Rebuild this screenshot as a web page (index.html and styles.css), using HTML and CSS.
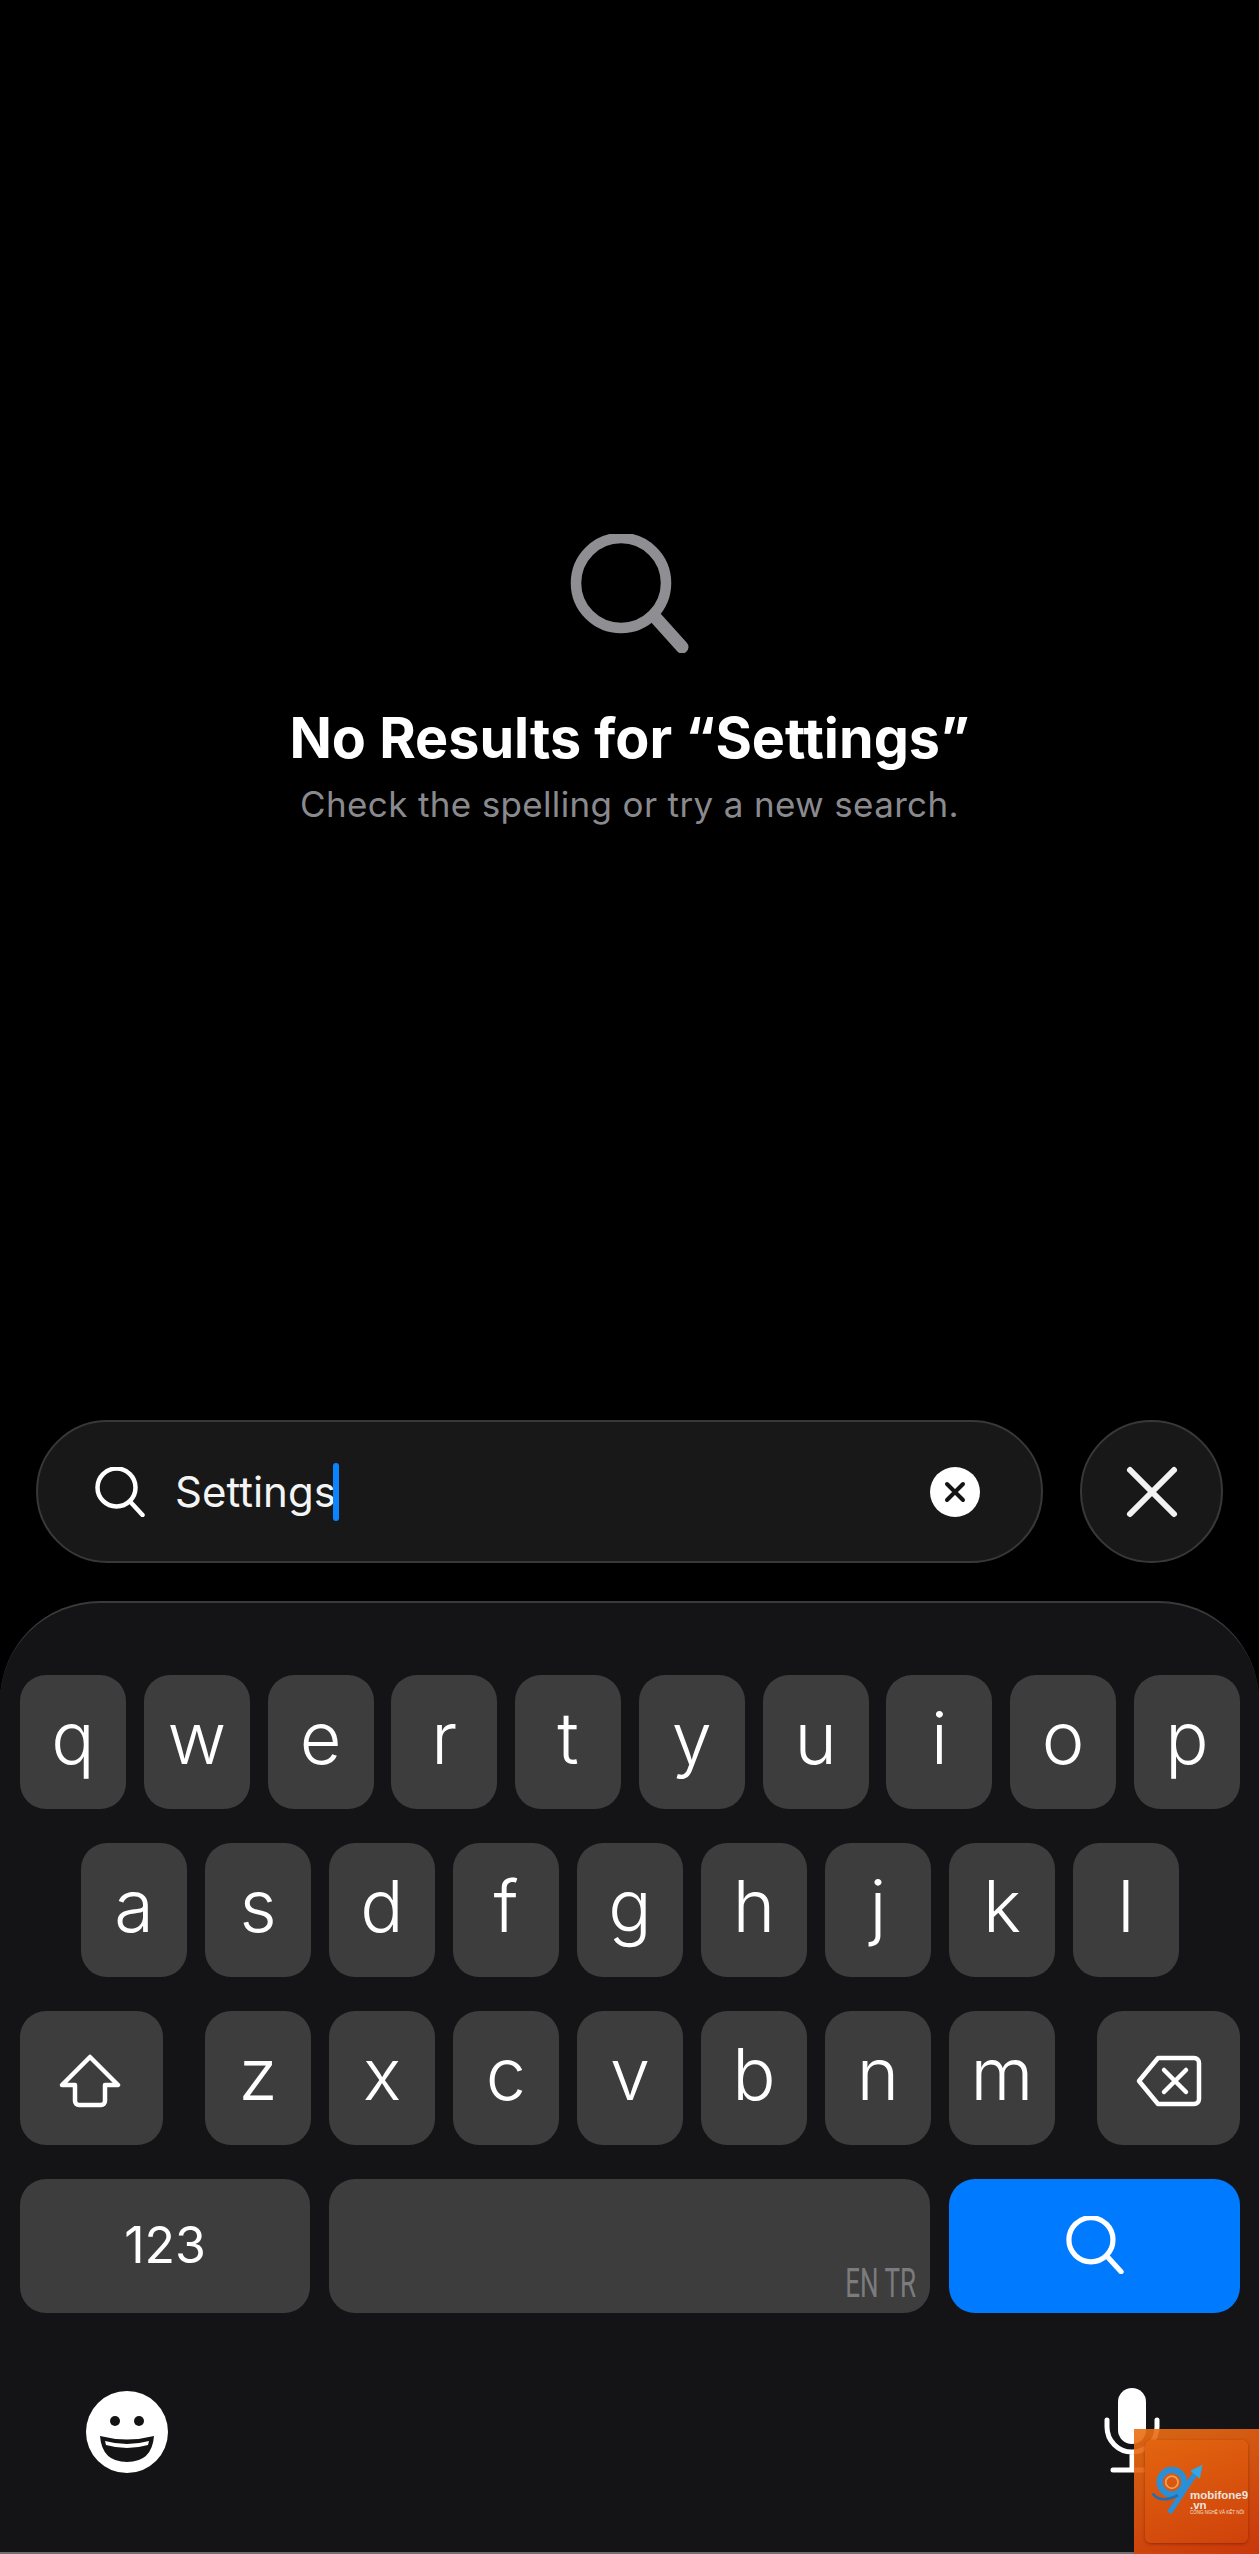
FILE: index.html
```html
<!DOCTYPE html>
<html lang="en">
<head>
    <meta charset="UTF-8" />
    <title>Search</title>
    <link rel="stylesheet" href="styles.css">
</head>
<body>

<svg class="defs" width="0" height="0">
    <symbol id="glass" viewBox="0 0 100 100">
        <circle cx="43" cy="41" r="38" fill="none" stroke="currentColor" stroke-width="9" />
        <path d="M71 70 L95 96" fill="none" stroke="currentColor" stroke-width="9" stroke-linecap="round" />
    </symbol>
</svg>

<main class="empty">
    <svg class="empty-icon" viewBox="0 0 119 119">
        <circle cx="51" cy="49" r="45" fill="none" stroke="currentColor" stroke-width="10.5" />
        <path d="M85 83 L112 113" fill="none" stroke="currentColor" stroke-width="13" stroke-linecap="round" />
    </svg>
    <h1>No Results for “Settings”</h1>
    <p>Check the spelling or try a new search.</p>
</main>

<div class="search-row">
    <div class="search-field">
        <svg class="field-icon"><use href="#glass" /></svg>
        <span class="query">Settings</span><span class="caret"></span>
        <span class="clear">
            <svg viewBox="0 0 50 50"><path d="M17 17 L33 33 M33 17 L17 33" /></svg>
        </span>
    </div>
    <div class="close">
        <svg viewBox="0 0 50 50"><path d="M3 3 L47 47 M47 3 L3 47" /></svg>
    </div>
</div>

<section class="keyboard">
    <div class="row">
        <div class="key">q</div><div class="key">w</div><div class="key">e</div><div class="key">r</div><div class="key">t</div>
        <div class="key">y</div><div class="key">u</div><div class="key">i</div><div class="key">o</div><div class="key">p</div>
    </div>
    <div class="row row-center">
        <div class="key">a</div><div class="key">s</div><div class="key">d</div><div class="key">f</div><div class="key">g</div>
        <div class="key">h</div><div class="key">j</div><div class="key">k</div><div class="key">l</div>
    </div>
    <div class="row">
        <div class="key key-wide">
            <svg class="shift" viewBox="0 0 62 54"><path d="M31 3 L59 31 H46 V47 a4 4 0 0 1 -4 4 H20 a4 4 0 0 1 -4 -4 V31 H3 Z" /></svg>
        </div>
        <div class="letters">
            <div class="key">z</div><div class="key">x</div><div class="key">c</div><div class="key">v</div>
            <div class="key">b</div><div class="key">n</div><div class="key">m</div>
        </div>
        <div class="key key-wide">
            <svg class="backspace" viewBox="0 0 66 52"><path d="M22 3 H58 a5 5 0 0 1 5 5 V44 a5 5 0 0 1 -5 5 H22 L3 26 Z" /><path d="M28 15 L50 37 M50 15 L28 37" /></svg>
        </div>
    </div>
    <div class="row">
        <div class="key key-123">123</div>
        <div class="key key-space"><span class="langs">EN TR</span></div>
        <div class="key key-go"><svg class="go-icon"><use href="#glass" /></svg></div>
    </div>
    <div class="kb-bottom">
        <svg class="emoji" viewBox="0 0 82 82">
            <circle cx="41" cy="41" r="41" fill="#fff" />
            <circle cx="29" cy="30" r="5" fill="#141416" />
            <circle cx="53" cy="30" r="5" fill="#141416" />
            <path d="M14 45 Q41 52 68 45 Q66 71 41 71 Q16 71 14 45 Z" fill="#141416" />
            <path d="M19 50 Q41 56 63 50 L62 54 Q41 60 20 54 Z" fill="#fff" />
        </svg>
        <svg class="mic" viewBox="0 0 56 86">
            <rect x="14" y="1" width="28" height="56" rx="14" fill="#fff" />
            <path d="M3 33 V40 a25 25 0 0 0 50 0 V33 M28 65 V81 M9 83 H47" fill="none" stroke="#fff" stroke-width="5" stroke-linecap="round" />
        </svg>
    </div>
</section>

<!-- watermark sits over the corner of the keyboard -->
<aside class="badge">
    <div class="badge-card">
        <svg class="badge-logo" viewBox="0 0 64 64">
            <circle cx="25" cy="23" r="14" fill="none" stroke="#2b8fd8" stroke-width="7" />
            <circle cx="25" cy="23" r="7" fill="none" stroke="#e8a060" stroke-width="2" />
            <path d="M22 58 C32 44 42 26 55 9" fill="none" stroke="#2b8fd8" stroke-width="6" />
            <path d="M46 10 L60 3 L57 19 Z" fill="#35a6e6" />
            <path d="M3 36 Q12 48 32 38" fill="none" stroke="#1d6fb8" stroke-width="3" />
        </svg>
        <div class="badge-text">
            <span class="badge-name">mobifone9</span>
            <span class="badge-name">.vn</span>
            <span class="badge-tag">CÔNG NGHỆ VÀ KẾT NỐI</span>
        </div>
    </div>
</aside>

</body>
</html>
```

FILE: styles.css
```css
* {
    box-sizing: border-box;
}
body {
    margin: 0;
    height: 2554px;
    overflow: hidden;
    position: relative;
    background-color: #000;
    color: #fff;
    font-family: Inter, "Noto Sans", sans-serif;
}
.defs {
    position: absolute;
}
.empty {
    height: 1420px;
    padding-top: 534px;
    display: flex;
    flex-direction: column;
    align-items: center;
}
.empty-icon {
    width: 119px;
    height: 119px;
    color: #8e8e93;
}
.empty h1 {
    margin: 52px 0 0;
    font-size: 55.7px;
    line-height: 66px;
    font-weight: 700;
}
.empty p {
    margin: 11px 0 0;
    font-size: 35px;
    line-height: 44px;
    letter-spacing: 0.35px;
    color: #8a8a8e;
}
.search-row {
    height: 143px;
    padding: 0 36px;
    display: flex;
    gap: 37px;
}
.search-field {
    flex: 1;
    border: 2px solid #38383a;
    border-radius: 72px;
    background-color: #181818;
    padding: 0 61px 0 57px;
    display: flex;
    align-items: center;
}
.field-icon {
    width: 50px;
    height: 50px;
    color: #fff;
}
.query {
    margin-left: 30px;
    font-size: 42px;
    color: #f4f4f4;
}
.caret {
    width: 6px;
    height: 58px;
    margin-left: -3px;
    border-radius: 3px;
    background-color: #0a84ff;
}
.clear {
    margin-left: auto;
    width: 50px;
    height: 50px;
    border-radius: 50%;
    background-color: #fff;
}
.clear svg {
    display: block;
    fill: none;
    stroke: #141414;
    stroke-width: 4px;
    stroke-linecap: round;
}
.close {
    width: 143px;
    height: 143px;
    border: 2px solid #38383a;
    border-radius: 50%;
    background-color: #181818;
    display: flex;
    align-items: center;
    justify-content: center;
}
.close svg {
    width: 50px;
    height: 50px;
    fill: none;
    stroke: #f2f2f2;
    stroke-width: 6px;
    stroke-linecap: round;
    overflow: visible;
}
.keyboard {
    margin-top: 38px;
    height: 953px;
    border-top: 2px solid #3a3a3c;
    border-bottom: 2px solid #6e6e70;
    border-radius: 100px 100px 0 0;
    background-color: #141416;
    padding: 72px 19px 0 20px;
}
.row {
    display: flex;
    justify-content: space-between;
    height: 134px;
    margin-bottom: 34px;
}
.row-center {
    justify-content: center;
    gap: 18px;
}
.letters {
    display: flex;
    gap: 18px;
}
.key {
    width: 106px;
    height: 134px;
    border-radius: 26px;
    background-color: #3d3d3d;
    display: flex;
    align-items: center;
    justify-content: center;
    font-size: 72px;
    font-weight: 350;
    padding-bottom: 10px;
}
.key-wide {
    width: 143px;
    padding: 5px 4px 0 0;
}
.key-wide:last-child {
    padding-right: 0;
}
.key-123 {
    width: 290px;
    font-size: 50px;
    font-weight: 400;
    padding-bottom: 2px;
}
.key-space {
    width: 601px;
    padding: 0 14px 9px 0;
    align-items: flex-end;
    justify-content: flex-end;
}
.key-go {
    width: 291px;
    padding-bottom: 3px;
    background-color: #007aff;
}
.langs {
    font-family: Roboto, sans-serif;
    font-size: 40px;
    line-height: 40px;
    font-weight: 400;
    color: #7c7c7e;
    transform: scaleX(0.65);
    transform-origin: right;
}
.go-icon {
    width: 58px;
    height: 58px;
    color: #fff;
}
.shift,
.backspace {
    fill: none;
    stroke: #fff;
    stroke-width: 4.5px;
    stroke-linejoin: round;
    stroke-linecap: round;
}
.shift {
    width: 62px;
    height: 54px;
}
.backspace {
    width: 66px;
    height: 52px;
}
.kb-bottom {
    display: flex;
    justify-content: space-between;
    padding: 40px 80px 0 66px;
}
.emoji {
    width: 82px;
    height: 82px;
    margin-top: 4px;
}
.mic {
    width: 56px;
    height: 86px;
}
.badge {
    position: absolute;
    right: 0;
    bottom: 0;
    width: 125px;
    height: 125px;
    padding: 11px;
    background: linear-gradient(160deg, rgba(236, 112, 20, 0.9), rgba(205, 56, 10, 0.98));
}
.badge-card {
    height: 103px;
    border-radius: 6px;
    background: linear-gradient(160deg, #e2650f, #cf420b);
    box-shadow: 0 1px 3px rgba(90, 20, 0, 0.5);
    display: flex;
    align-items: flex-end;
    padding: 0 0 25px 3px;
}
.badge-logo {
    width: 60px;
    height: 56px;
    flex-shrink: 0;
}
.badge-text {
    display: flex;
    flex-direction: column;
    margin-left: -18px;
    padding-bottom: 2px;
}
.badge-name {
    font-family: "Liberation Sans", sans-serif;
    font-size: 11.5px;
    line-height: 10px;
    font-weight: 700;
    color: #e9e4e0;
}
.badge-tag {
    font-family: "Liberation Sans", sans-serif;
    font-size: 4.5px;
    line-height: 6px;
    white-space: nowrap;
    color: #f3e2d6;
}
```
